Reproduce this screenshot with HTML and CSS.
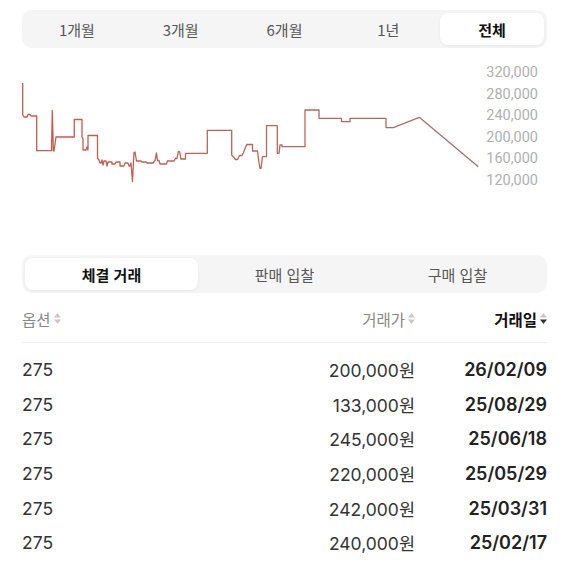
FILE: index.html
```html
<!DOCTYPE html>
<html lang="ko">
<head>
    <meta charset="UTF-8">
    <meta name="viewport" content="width=device-width, initial-scale=1.0">
    <title>시세</title>
    <link rel="stylesheet" href="styles.css">
</head>
<body>
    <div class="page">
        <div class="segment period">
            <button class="seg-item">1개월</button>
            <button class="seg-item">3개월</button>
            <button class="seg-item">6개월</button>
            <button class="seg-item">1년</button>
            <button class="seg-item active">전체</button>
        </div>

        <div class="chart">
            <svg class="chart-line" viewBox="22 62 463 130" width="463" height="130">
                <defs>
                    <linearGradient id="lineColor" x1="0" x2="1" y1="0" y2="0">
                        <stop offset="0" stop-color="#c55a4b"/>
                        <stop offset="0.55" stop-color="#b8665c"/>
                        <stop offset="1" stop-color="#9a7272"/>
                    </linearGradient>
                </defs>
                <path fill="none" stroke="url(#lineColor)" stroke-width="1.3" stroke-linejoin="round"
                      d="M22.7 83 V115 L24 117 H27 L28 114.5 H30 L31 116 H36.7 V150.7 H51.5
                         L52.3 110.5 L53.3 150.7 L54 151 L56 137 H74.3 V119.5 H82 V137 L83 139 V150
                         H86 L87 147 L88 150 V135.5 H97.5 V158 L99 160 L100 163 H101 L102 160 L103 165
                         L104 161 H106 L107 166 L108 162 H112 V164 H115 L116 162 H120 V166 H124 L125 163
                         H128 L129 166 H130 L131 163 L132.5 181.5 L134 152.5 L135 152 L136.5 161 H141
                         L142 162 H146 L147 163 H153 L155 160.5 L156.5 153 L157.5 160.5 H159 L160 164
                         H166.5 L167.5 161 H174 L175.5 158.5 H177 L178.3 151.7 H179.5 L181 159 H185.5
                         V153.3 H207.3 V130.3 H231.7 V155 L233.5 157 L235.5 159.5 H237.5 L239.5 155.5
                         H242 L243.5 152.5 L246.7 144.5 H252.5 V151 H257.5 L259 163 L260 168.3 H261
                         L262.5 156.7 H266.5 V125.7 H277.3 V153.3 H279 L280 145 H282 V146.7 H305
                         V110 H319 V118.3 H341.5 V121.7 H350 V118.3 H386 V127.7 H393.3 L419.3 117.3
                         L478.3 166.7"/>
            </svg>
            <ul class="axis">
                <li>320,000</li>
                <li>280,000</li>
                <li>240,000</li>
                <li>200,000</li>
                <li>160,000</li>
                <li>120,000</li>
            </ul>
        </div>

        <div class="segment tabs">
            <button class="seg-item active">체결 거래</button>
            <button class="seg-item">판매 입찰</button>
            <button class="seg-item">구매 입찰</button>
        </div>

        <div class="table">
            <div class="row thead">
                <span class="col-option">옵션<svg class="sort" viewBox="0 0 7 11" width="7" height="11"><path d="M0 4.5 L3.5 0 L7 4.5Z"/><path d="M0 6.5 L3.5 11 L7 6.5Z"/></svg></span>
                <span class="col-price">거래가<svg class="sort" viewBox="0 0 7 11" width="7" height="11"><path d="M0 4.5 L3.5 0 L7 4.5Z"/><path d="M0 6.5 L3.5 11 L7 6.5Z"/></svg></span>
                <span class="col-date sorted">거래일<svg class="sort desc" viewBox="0 0 7 11" width="7" height="11"><path d="M0 4.5 L3.5 0 L7 4.5Z"/><path class="on" d="M0 6.5 L3.5 11 L7 6.5Z"/></svg></span>
            </div>
            <div class="tbody">
                <div class="row"><span class="col-option">275</span><span class="col-price">200,000원</span><span class="col-date">26/02/09</span></div>
                <div class="row"><span class="col-option">275</span><span class="col-price">133,000원</span><span class="col-date">25/08/29</span></div>
                <div class="row"><span class="col-option">275</span><span class="col-price">245,000원</span><span class="col-date">25/06/18</span></div>
                <div class="row"><span class="col-option">275</span><span class="col-price">220,000원</span><span class="col-date">25/05/29</span></div>
                <div class="row"><span class="col-option">275</span><span class="col-price">242,000원</span><span class="col-date">25/03/31</span></div>
                <div class="row"><span class="col-option">275</span><span class="col-price">240,000원</span><span class="col-date">25/02/17</span></div>
            </div>
        </div>
    </div>
</body>
</html>
```

FILE: styles.css
```css
/* General Styles */
body {
    font-family: 'Inter', 'Noto Sans CJK KR', sans-serif;
    background-color: #fff;
    color: #333;
    margin: 0;
    padding: 0;
}

.page {
    padding: 10px 21px 0 22px;
}

/* Segmented controls */
.segment {
    display: flex;
    background: #f5f5f6;
    border-radius: 10px;
    padding: 3px;
    height: 38px;
    box-sizing: border-box;
}

.seg-item {
    flex: 1;
    border: none;
    background: transparent;
    border-radius: 8px;
    font-family: 'Noto Sans CJK KR', sans-serif;
    font-size: 15px;
    color: #555;
    padding: 0;
    cursor: pointer;
}

.seg-item.active {
    background: #fff;
    color: #111;
    font-weight: 700;
    box-shadow: 0 1px 3px rgba(0, 0, 0, 0.06);
}

/* Chart */
.chart {
    display: flex;
    margin-top: 14px;
}

.chart-line {
    display: block;
}

.axis {
    list-style: none;
    margin: 0;
    padding: 0;
    width: 53px;
    text-align: right;
    font-family: 'Roboto', sans-serif;
    font-size: 14.5px;
    line-height: 21.6px;
    color: #b0b0b0;
}

.tabs {
    margin-top: 63px;
}

/* Table */
.row {
    display: grid;
    grid-template-columns: 1fr 120px 132px;
    align-items: center;
    height: 34.7px;
    font-size: 17.5px;
    color: #333;
}

.col-price,
.col-date {
    text-align: right;
}

.col-date {
    font-size: 18px;
    font-weight: 600;
    color: #222;
}

.thead {
    height: 50px;
    box-sizing: border-box;
    padding-top: 2px;
    border-bottom: 1px solid #eeeeee;
    font-family: 'Noto Sans CJK KR', sans-serif;
    font-size: 15.5px;
    color: #888;
}

.thead span {
    display: flex;
    align-items: center;
    gap: 3px;
}

.thead .col-price,
.thead .col-date {
    justify-content: flex-end;
    font-size: 15.5px;
}

.thead .col-date {
    color: #111;
    font-weight: 700;
}

.sort {
    fill: #c8c8c8;
}

.sort .on {
    fill: #333;
}

.tbody {
    padding-top: 9px;
}
```
